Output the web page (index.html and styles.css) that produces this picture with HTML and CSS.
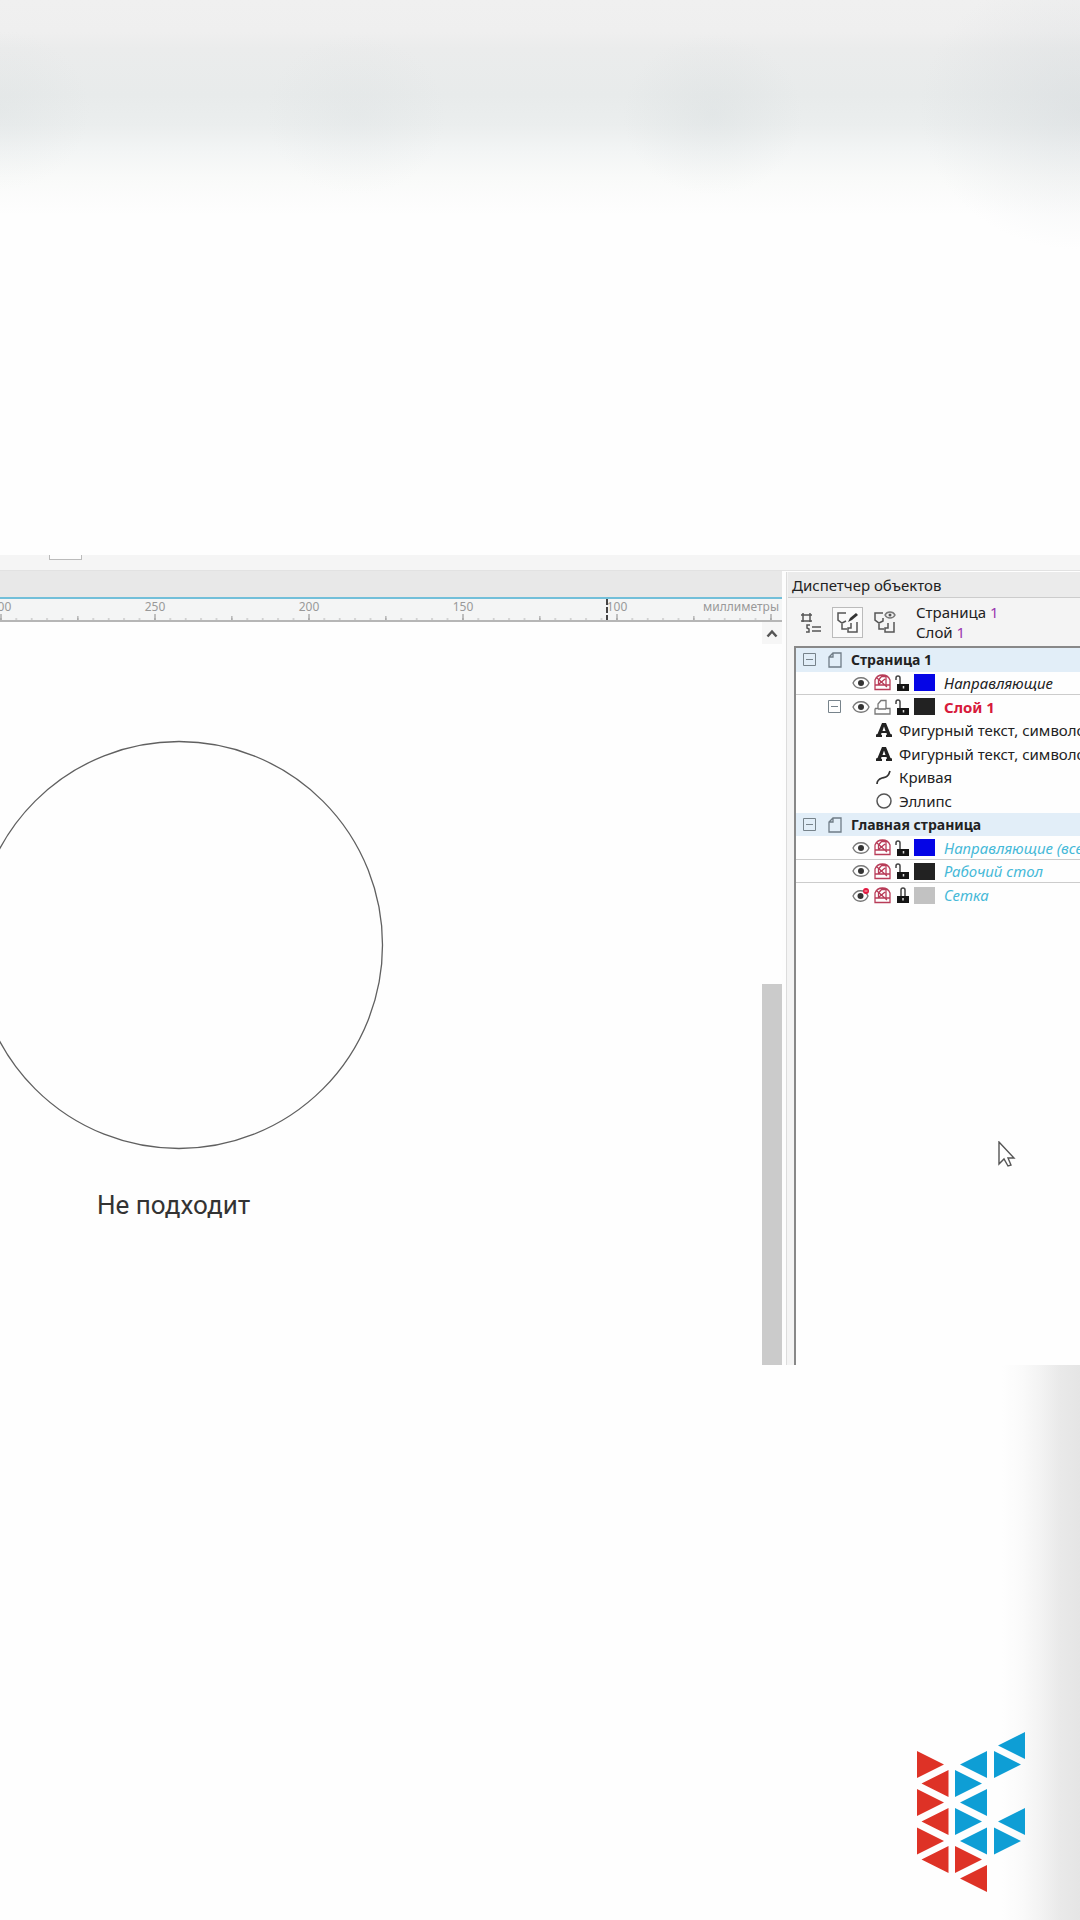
FILE: index.html
```html
<!DOCTYPE html>
<html lang="ru">
<head>
<meta charset="utf-8">
<title>Диспетчер объектов</title>
<link rel="stylesheet" href="styles.css">
</head>
<body>
<svg class="defs" aria-hidden="true">
  <symbol id="minus" viewBox="0 0 13 13"><path d="M.5.5h12v12H.5zM3 6.500h7" fill="none" stroke="#77838b"/></symbol>
  <symbol id="page" viewBox="0 0 14 16"><path d="M5 1h8v14H1V5zM5 1v4H1" fill="none" stroke="#6f7c86" stroke-width="1.300"/></symbol>
  <symbol id="eye" viewBox="0 0 18 14"><path d="M1 7c3-7 13-7 16 0-3 7-13 7-16 0z" fill="none" stroke="#777" stroke-width="1.300"/><circle cx="9" cy="7" r="3" fill="#333"/></symbol>
  <symbol id="eye-off" viewBox="0 0 18 14"><path d="M1 8c3-7 12-7 15 0-3 7-12 7-15 0z" fill="none" stroke="#777" stroke-width="1.300"/><circle cx="8.500" cy="8" r="3" fill="#333"/><circle cx="14" cy="3" r="3" fill="#e3173f"/><path d="M12.500 3h3" stroke="#fbb"/></symbol>
  <symbol id="print" viewBox="0 0 17 16"><path d="M4 10V5l3-3.500h5V10M1 9.500h3M12 9.500h4V15H1V9.500M4 10h8" fill="none" stroke="#777" stroke-width="1.300"/></symbol>
  <symbol id="print-off" viewBox="0 0 17 17"><path d="M1 15.500V6q2-5 7.500-5T16 6v9.500zM1 11h15M4.500 11V6l3-3.500h4.500V11M3 4l10 9M5 10l6-5" fill="none" stroke="#b83c58" stroke-width="1.300"/></symbol>
  <symbol id="unlock" viewBox="0 0 15 16"><path d="M1 5V3q0-2 2-2t2 2v6" fill="none" stroke="#444" stroke-width="1.500"/><path d="M2 9h12v7H2z" fill="#151515"/><path d="M8.500 11v2.500" stroke="#ddd" stroke-width="1.500"/></symbol>
  <symbol id="lock" viewBox="0 0 15 16"><path d="M6 9V3q0-2 2-2t2 2v6" fill="none" stroke="#444" stroke-width="1.500"/><path d="M2 9h12v7H2z" fill="#151515"/><path d="M8 11v2.500" stroke="#ddd" stroke-width="1.500"/></symbol>
  <symbol id="letter" viewBox="0 0 16 16"><path d="M0 14v-1.500l1.500-.5L6 1h4l4.500 11 1.500.5V15h-6v-2l1-.5-.5-1.500h-5l-.5 1.500 1 .5v2H0zM6.500 9h3L8 4.500z" fill="#222" fill-rule="evenodd"/></symbol>
  <symbol id="curve" viewBox="0 0 16 16"><path d="M1 15c0-4 2-5 5-6s6 0 8-7" fill="none" stroke="#333" stroke-width="1.700"/></symbol>
  <symbol id="ellipse" viewBox="0 0 16 16"><circle cx="8" cy="8" r="7" fill="none" stroke="#555" stroke-width="1.500"/></symbol>
</svg>

<div class="backdrop-top"></div>

<main class="app">
  <div class="propbar"><span class="propbar-field"></span></div>
  <div class="work">
    <section class="document">
      <div class="tabs"></div>
      <div class="ruler">
        <svg class="ticks" aria-hidden="true">
          <defs>
            <pattern id="minor" x="0" y="0" width="15.400" height="22" patternUnits="userSpaceOnUse"><path d="M.9 19v3" stroke="#b4b4b4"/></pattern>
            <pattern id="half" x="77" y="0" width="154" height="22" patternUnits="userSpaceOnUse"><path d="M.9 17v5" stroke="#999"/></pattern>
            <pattern id="major" x="0" y="0" width="154" height="22" patternUnits="userSpaceOnUse"><path d="M1 15v7" stroke="#888"/></pattern>
          </defs>
          <rect width="100%" height="22" fill="url(#minor)"/>
          <rect width="100%" height="22" fill="url(#half)"/>
          <rect width="100%" height="22" fill="url(#major)"/>
        </svg>
        <div class="marks"><span>300</span><span>250</span><span>200</span><span>150</span><span>100</span></div>
        <span class="units">миллиметры</span>
        <i class="pointer-mark"></i>
      </div>
      <div class="view">
        <div class="canvas">
          <svg class="shape" viewBox="0 0 410 410" aria-hidden="true"><circle cx="205" cy="205" r="203.500" fill="none" stroke="#606060" stroke-width="1.300"/></svg>
          <p class="caption">Не подходит</p>
        </div>
        <div class="scroll">
          <button class="scroll-up" aria-label="Вверх"><svg width="12" height="9" viewBox="0 0 12 9"><path d="M1.500 7.500 6 2.500l4.500 5" fill="none" stroke="#555" stroke-width="2.500"/></svg></button>
          <div class="thumb"></div>
        </div>
      </div>
    </section>

    <aside class="dock">
      <h2 class="dock-title">Диспетчер объектов</h2>
      <div class="dock-tools">
        <button class="tool" aria-label="Свойства объекта"><svg width="24" height="24" viewBox="0 0 24 24" fill="none" stroke="#555" stroke-width="1.500"><path d="M4 3v9M11 3v9M2 5h11M2 11h11M13 17h9M13 21h9M11 15H8v3l2 1v3H7"/></svg></button>
        <button class="tool tool-on" aria-label="Редактирование по слоям"><svg width="24" height="24" viewBox="0 0 24 24" fill="none" stroke="#555" stroke-width="1.500"><path d="M10 3H2v7l4 3 4-2M6 13v6h5M21 12v10h-9v-4h3v-5"/><path d="M12 12l2-4 6-5 2 2-6 5z" fill="#333" stroke="none"/></svg></button>
        <button class="tool" aria-label="Диспетчер слоев"><svg width="24" height="24" viewBox="0 0 24 24" fill="none" stroke="#555" stroke-width="1.500"><path d="M10 3H2v7l4 3 4-2V8M6 13v6h5M21 12v10h-9v-4h3v-5"/><path d="M12 5c2-4 8-4 10 0-2 4-8 4-10 0z" stroke="#777"/><circle cx="17" cy="5" r="1.500" fill="#555" stroke="none"/></svg></button>
        <p class="current">Страница <span>1</span><br>Слой <span>1</span></p>
      </div>
      <ul class="tree">
        <li class="row head"><button class="fold" aria-label="Свернуть"><svg width="13" height="13"><use href="#minus"/></svg></button><svg class="sheet" width="14" height="16"><use href="#page"/></svg>Страница 1</li>
        <li class="row layer line"><svg width="18" height="14"><use href="#eye"/></svg><svg width="17" height="17"><use href="#print-off"/></svg><svg width="15" height="16"><use href="#unlock"/></svg><i class="swatch blue"></i><em>Направляющие</em></li>
        <li class="row layer foldable"><button class="fold" aria-label="Свернуть"><svg width="13" height="13"><use href="#minus"/></svg></button><svg width="18" height="14"><use href="#eye"/></svg><svg width="17" height="16"><use href="#print"/></svg><svg width="15" height="16"><use href="#unlock"/></svg><i class="swatch black"></i><strong>Слой 1</strong></li>
        <li class="row object"><svg width="16" height="16"><use href="#letter"/></svg>Фигурный текст, символов</li>
        <li class="row object"><svg width="16" height="16"><use href="#letter"/></svg>Фигурный текст, символов</li>
        <li class="row object"><svg width="16" height="16"><use href="#curve"/></svg>Кривая</li>
        <li class="row object"><svg width="16" height="16"><use href="#ellipse"/></svg>Эллипс</li>
        <li class="row head"><button class="fold" aria-label="Свернуть"><svg width="13" height="13"><use href="#minus"/></svg></button><svg class="sheet" width="14" height="16"><use href="#page"/></svg>Главная страница</li>
        <li class="row layer line master"><svg width="18" height="14"><use href="#eye"/></svg><svg width="17" height="17"><use href="#print-off"/></svg><svg width="15" height="16"><use href="#unlock"/></svg><i class="swatch blue"></i><em>Направляющие (все</em></li>
        <li class="row layer line master"><svg width="18" height="14"><use href="#eye"/></svg><svg width="17" height="17"><use href="#print-off"/></svg><svg width="15" height="16"><use href="#unlock"/></svg><i class="swatch black"></i><em>Рабочий стол</em></li>
        <li class="row layer master"><svg width="18" height="14"><use href="#eye-off"/></svg><svg width="17" height="17"><use href="#print-off"/></svg><svg width="15" height="16"><use href="#lock"/></svg><i class="swatch gray"></i><em>Сетка</em></li>
      </ul>
      <svg class="cursor" width="18" height="28" viewBox="0 0 18 28" aria-hidden="true"><path d="M1 1v22l5-5 4 7 3-1-3-7h6z" fill="#fff" stroke="#555" stroke-width="1.400"/></svg>
    </aside>
  </div>
</main>

<footer class="backdrop-bottom">
  <svg class="logo" width="108" height="160" viewBox="0 0 108 160" role="img" aria-label="Логотип">
    <g fill="#de3226">
      <path d="M0 19v27l27-13.500zM0 57v27l27-13.500zM0 95.500v27L27 109z"/>
      <path d="M31.500 38v27l-27-13.500zM31.500 76v27l-27-13.500zM31.500 114v27l-27-13.500z"/>
      <path d="M38 114v27l27-13.500zM70 133v27l-27-13.500z"/>
    </g>
    <g fill="#0e9ed5">
      <path d="M38 38v27l27-13.500zM38 76v27l27-13.500zM77 19v27l27-13.500zM77 95.500v27L104 109z"/>
      <path d="M70 19v27L43 32.500zM70 57v27L43 70.500zM70 95.500v27L43 109zM108 0v27L81 13.500zM108 76v27L81 89.500z"/>
    </g>
  </svg>
</footer>
</body>
</html>
```
FILE: styles.css
```css
* { box-sizing: border-box; }

body {
  margin: 0;
  min-height: 100vh;
  display: flex;
  flex-direction: column;
  overflow-x: hidden;
  background: #fefefe;
  color: #222;
  font: 15px/20px "Noto Sans", "Open Sans", sans-serif;
}

h2, p, ul { margin: 0; padding: 0; font-weight: 400; }
button { padding: 0; border: 0; background: none; display: flex; }
svg { flex: none; }

.defs { position: absolute; width: 0; height: 0; }

.backdrop-top {
  flex: 1 0 0px;
  background:
    radial-gradient(ellipse 90px 80px at 66% 115px, rgba(205, 212, 214, .25), transparent),
    radial-gradient(ellipse 90px 80px at 33% 115px, rgba(210, 216, 218, .18), transparent),
    radial-gradient(ellipse 160px 140px at 100% 110px, rgba(205, 210, 214, .35), transparent),
    radial-gradient(ellipse 90px 80px at 0 110px, rgba(210, 216, 218, .2), transparent),
    linear-gradient(#f0f0f0 0, #efefef 32px, #ebecec 48px, #e8ebeb 95px, #ebeeee 125px, #f3f5f5 152px, #f9faf9 178px, #fefefe 215px);
}

.app { min-height: 810px; display: flex; flex-direction: column; }

.propbar {
  height: 16px;
  padding-left: 49px;
  background: #f5f5f5;
  border-bottom: 1px solid #e2e2e2;
}
.propbar-field {
  display: block;
  width: 33px;
  height: 5px;
  background: #fdfdfd;
  border: solid #bbb;
  border-width: 0 1px 1px;
}

.work { flex: 1; display: flex; }
.document { flex: 1; min-width: 0; display: flex; flex-direction: column; }
.tabs { height: 28px; background: #e8e8e8; border-bottom: 2px solid #72bfd9; }

.ruler {
  position: relative;
  height: 23px;
  display: flex;
  overflow: hidden;
  background: #f4f5f5;
  border-bottom: 2px solid #b6b6b6;
  color: #999;
  font-size: 12px;
  line-height: 16px;
}
.ticks { position: absolute; left: 0; top: 0; width: 100%; height: 21px; }
.marks { display: flex; margin-left: -76px; }
.marks span { width: 154px; text-align: center; }
.units { margin-left: auto; padding-right: 3px; }
.pointer-mark { position: absolute; left: 606px; top: 0; height: 22px; border-left: 2px dashed #444; }

.view { flex: 1; display: flex; }
.canvas { flex: 1; position: relative; overflow: hidden; }
.shape { position: absolute; left: -26px; top: 118px; width: 410px; height: 410px; }
.caption { position: absolute; left: 97px; top: 565px; font: 26px/36px Roboto, sans-serif; color: #333; }

.scroll { width: 20px; display: flex; flex-direction: column; justify-content: space-between; }
.scroll-up { height: 22px; align-items: center; justify-content: center; background: #f6f6f6; }
.thumb { height: 381px; background: #cbcbcb; }

.dock {
  position: relative;
  width: 298px;
  display: flex;
  flex-direction: column;
  margin-top: 1px;
  border-left: 4px solid #fdfdfd;
  background: #f4f4f4;
  box-shadow: inset 1px 0 #dcdcdc;
}
.dock-title {
  height: 26px;
  margin-left: 2px;
  padding-left: 4px;
  background: #ebebeb;
  border-bottom: 1px solid #ccc;
  font-size: 15px;
  line-height: 26px;
}
.dock-tools { height: 48px; display: flex; align-items: center; padding-left: 9px; gap: 6px; }
.tool { width: 31px; height: 31px; align-items: center; justify-content: center; border: 1px solid transparent; }
.tool-on { background: #fafafa; border-color: #bbb; }
.current { margin-left: 10px; white-space: nowrap; }
.current span { color: #9a38b0; }

.tree {
  flex: 1;
  margin-left: 8px;
  border: solid #888;
  border-width: 2px 0 0 2px;
  background: #fefefe;
  list-style: none;
  display: grid;
  grid-template-rows: repeat(11, minmax(0, 1fr));
  padding-bottom: 458px;
  overflow: hidden;
}
.row { display: flex; align-items: center; overflow: hidden; white-space: nowrap; }
.head { padding-left: 7px; gap: 8px; background: #e2eef8; font-size: 14px; font-weight: 700; }
.sheet { margin: 0 1px 0 4px; }
.layer { padding-left: 56px; gap: 4px; }
.foldable { padding-left: 32px; }
.foldable .fold { margin-right: 7px; }
.line { border-bottom: 1px solid #ccc; }
.object { padding-left: 80px; gap: 7px; }
.swatch { flex: none; width: 21px; height: 17px; margin-right: 5px; }
.blue { background: #0505e6; }
.black { background: #222; }
.gray { background: #c2c2c2; }
.layer strong { color: #d71a3c; }
.master em { color: #46b9d8; }

.cursor { position: absolute; left: 212px; top: 569px; }

.backdrop-bottom {
  flex: 1 0 0px;
  display: flex;
  align-items: flex-end;
  justify-content: flex-end;
  background: linear-gradient(to left, #e5e5e5 0, #e9e9e9 20px, #f3f3f3 40px, #fafafa 58px, #fefefe 78px);
}
.logo { margin: 0 55px 28px 0; }
```
